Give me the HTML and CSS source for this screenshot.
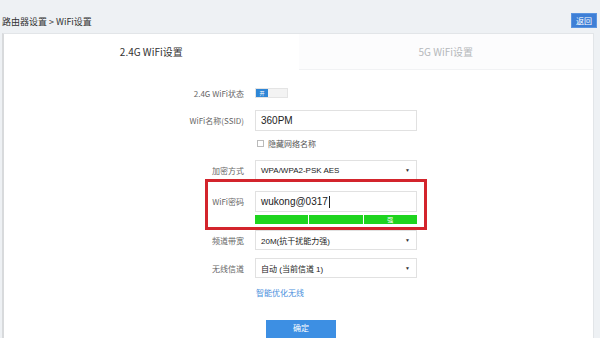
FILE: index.html
```html
<!DOCTYPE html>
<html lang="zh-CN">
<head>
  <meta charset="UTF-8" />
  <title>WiFi设置</title>
  <link rel="stylesheet" href="styles.css">
</head>
<body>

  <div class="topbar">
    <div class="crumb">路由器设置 &gt; WiFi设置</div>
    <a class="back-btn" href="#">返回</a>
  </div>

  <div class="panel">
    <div class="tabs">
      <div class="tab active">2.4G WiFi设置</div>
      <div class="tab">5G WiFi设置</div>
    </div>

    <form class="form">
      <div class="row row-switch">
        <label class="label">2.4G WiFi状态</label>
        <div class="switch"><span class="switch-on">开</span><span class="switch-off"></span></div>
      </div>

      <div class="row row-ssid">
        <label class="label">WiFi名称(SSID)</label>
        <div class="field input">360PM</div>
      </div>

      <div class="row row-check">
        <span class="label"></span>
        <span class="checkbox"></span>
        <span class="check-text">隐藏网络名称</span>
      </div>

      <div class="row row-enc">
        <label class="label">加密方式</label>
        <div class="field select">WPA/WPA2-PSK AES<span class="arrow">▼</span></div>
      </div>

      <!-- password row with red highlight frame over it -->
      <div class="row row-pwd">
        <label class="label">WiFi密码</label>
        <div class="pwd-col">
          <div class="field input">wukong@0317<span class="caret"></span></div>
          <div class="strength">
            <span></span>
            <span></span>
            <span>强</span>
          </div>
        </div>
        <div class="highlight"></div>
      </div>

      <div class="row row-bw">
        <label class="label">频道带宽</label>
        <div class="field select">20M(抗干扰能力强)<span class="arrow">▼</span></div>
      </div>

      <div class="row row-ch">
        <label class="label">无线信道</label>
        <div class="field select">自动 (当前信道 1)<span class="arrow">▼</span></div>
      </div>

      <div class="row row-link">
        <span class="label"></span>
        <a class="link" href="#">智能优化无线</a>
      </div>

      <div class="actions">
        <button type="button" class="ok-btn">确定</button>
      </div>
    </form>
  </div>

</body>
</html>
```

FILE: styles.css
```css
body {
  margin: 0;
  background: #eef1f4;
  font-family: "Noto Sans CJK SC", "Noto Sans", sans-serif;
  color: #333;
  height: 338px;
  overflow: hidden;
}

.topbar {
  height: 33px;
  display: flex;
  align-items: flex-end;
  justify-content: space-between;
  padding: 0 3px 0 2px;
  box-sizing: border-box;
}

.crumb {
  font-size: 9px;
  line-height: 12px;
  margin-bottom: 5px;
  color: #333;
}

.back-btn {
  background: #3e7fd6;
  color: #fff;
  font-size: 8px;
  line-height: 13px;
  padding: 0 4px;
  text-decoration: none;
  border: 1px solid #5b95e0;
  margin-bottom: 5px;
}

.panel {
  margin: 0 6px 0 2px;
  background: #fff;
  border: 1px solid #e2e5e8;
  border-left: 2px solid #d8dadc;
  border-bottom: none;
  height: 305px;
}

.tabs {
  display: flex;
  height: 36px;
}

.tab {
  flex: 1;
  text-align: center;
  font-size: 10px;
  line-height: 36px;
  color: #333;
}

.tab + .tab {
  color: #b5b8bb;
  background: #fcfcfd;
  border-bottom: 1px solid #f1f2f4;
}

.form {
  padding-left: 140px;
}

.row {
  display: flex;
  align-items: center;
}

.label {
  width: 100px;
  margin-right: 11px;
  text-align: right;
  font-size: 8px;
  color: #666;
  flex-shrink: 0;
}

.row-switch {
  margin-top: 16px;
  height: 14px;
}

.switch {
  display: flex;
  height: 8px;
  border: 1px solid #e4e4e4;
}

.switch-on {
  width: 12px;
  background: #2f86d6;
  color: #fff;
  font-size: 5px;
  line-height: 8px;
  text-align: center;
}

.switch-off {
  width: 19px;
  background: #f3f3f3;
}

.field {
  width: 162px;
  height: 21px;
  box-sizing: border-box;
  border: 1px solid #e1e1e1;
  padding-left: 5px;
  display: flex;
  align-items: center;
  color: #222;
  position: relative;
}

.input {
  font-size: 10px;
  font-family: "Liberation Sans", "Noto Sans CJK SC", sans-serif;
}

.select {
  font-size: 8px;
  font-family: "Liberation Sans", "Noto Sans CJK SC", sans-serif;
  height: 20px;
}

.arrow {
  margin-left: auto;
  margin-right: 6px;
  font-size: 5px;
  color: #333;
}

.row-ssid {
  margin-top: 10px;
}

.row-check {
  margin-top: 5px;
  height: 14px;
}

.checkbox {
  width: 5px;
  height: 5px;
  border: 1px solid #bbb;
  margin-left: 2px;
  margin-right: 4px;
}

.check-text {
  font-size: 8px;
  color: #555;
}

.row-enc {
  margin-top: 10px;
}

.row-pwd {
  margin-top: 11px;
  align-items: flex-start;
  position: relative;
}

.row-pwd .label {
  line-height: 21px;
}

.caret {
  width: 1px;
  height: 12px;
  background: #222;
  margin-left: 1px;
}

.strength {
  display: flex;
  gap: 1px;
  margin-top: 3px;
  width: 162px;
  height: 9px;
}

.strength span {
  flex: 1;
  background: #1ed41e;
  color: #fff;
  font-size: 6px;
  line-height: 9px;
  text-align: center;
}

/* red annotation frame around the password row */
.highlight {
  position: absolute;
  left: 61px;
  top: -12px;
  width: 222px;
  height: 51px;
  box-sizing: border-box;
  border: 3px solid #d3242c;
  pointer-events: none;
}

.row-bw {
  margin-top: 6px;
}

.row-ch {
  margin-top: 8px;
}

.row-link {
  margin-top: 8px;
  height: 12px;
}

.link {
  font-size: 8px;
  color: #4a8fdc;
  text-decoration: none;
  margin-left: 1px;
}

.actions {
  display: flex;
  margin-top: 22px;
  padding-left: 122px;
}

.ok-btn {
  width: 70px;
  padding: 2px 0 6px;
  line-height: 11px;
  background: #3d8fe3;
  border: none;
  color: #fff;
  font-size: 8px;
  font-family: "Noto Sans CJK SC", sans-serif;
}
```
